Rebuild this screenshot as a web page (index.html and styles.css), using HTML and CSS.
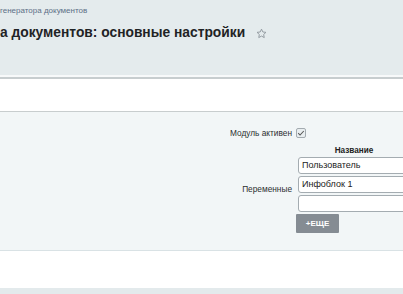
FILE: index.html
```html
<!DOCTYPE html>
<html lang="ru">
<head>
<meta charset="utf-8">
<title>Настройки генератора документов</title>
<link rel="stylesheet" href="styles.css">
</head>
<body>
<div class="page">
  <header class="head">
    <div class="crumbs">генератора документов</div>
    <div class="title-row">
      <h1 class="title">а документов: основные настройки</h1>
      <svg class="star" width="11" height="11" viewBox="0 0 24 24"><path d="M12 2.5l2.9 6.2 6.8.8-5 4.7 1.3 6.7L12 17.6l-6 3.3 1.3-6.7-5-4.7 6.8-.8z" fill="none" stroke="#8e969c" stroke-width="2" stroke-linejoin="round"/></svg>
    </div>
  </header>
  <div class="sep-light"></div>
  <div class="sep-dark"></div>
  <div class="tabs"></div>
  <section class="form">
    <div class="row row-active">
      <div class="label">Модуль активен</div>
      <div class="value"><span class="check"><svg width="8" height="8" viewBox="0 0 10 10"><path d="M1.5 5.2l2.3 2.3 4.7-5" fill="none" stroke="#555" stroke-width="1.3"/></svg></span></div>
    </div>
    <div class="row row-vars">
      <div class="label label-vars">Переменные</div>
      <div class="value">
        <div class="col-head">Название</div>
        <div class="inp">Пользователь</div>
        <div class="inp">Инфоблок 1</div>
        <div class="inp"></div>
        <div class="btn">+ЕЩЕ</div>
      </div>
    </div>
  </section>
  <div class="footer"></div>
  <div class="bottom"></div>
</div>
</body>
</html>
```

FILE: styles.css
```css
html, body { margin: 0; padding: 0; }
body {
  font-family: "Liberation Sans", Arial, sans-serif;
  background: #fff;
  overflow: hidden;
  width: 403px;
  height: 294px;
}
.page { width: 403px; overflow: hidden; }
.head {
  height: 75px;
  background: #e4ebed;
  box-sizing: border-box;
  padding: 6px 0 0 0;
}
.crumbs {
  font-size: 8px;
  color: #5c6f86;
  line-height: 10px;
}
.title-row {
  display: flex;
  align-items: center;
  margin-top: 8px;
}
.title {
  margin: 0;
  font-size: 13.8px;
  font-weight: bold;
  color: #1f2325;
  line-height: 18px;
}
.star { margin-left: 11px; }
.sep-light { height: 2px; background: #f7f9fa; }
.sep-dark { height: 2px; background: #c7cdcf; }
.tabs { height: 32px; background: #fff; border-bottom: 1px solid #c8cdce; }
.form {
  background: #f2f6f7;
  height: 139px;
  box-sizing: border-box;
  padding-top: 15px;
  border-bottom: 1px solid #d9e2e5;
}
.row {
  display: grid;
  grid-template-columns: 292px 200px;
  column-gap: 4px;
}
.label {
  font-size: 8.3px;
  color: #2c2f31;
  text-align: right;
  line-height: 10px;
}
.row-active { height: 10px; }
.row-active .label { padding-top: 1px; }
.row-active .value { display: flex; padding-top: 1px; }
.check {
  width: 8px;
  height: 8px;
  border: 1px solid #a3abb0;
  border-radius: 2px;
  background: #e9eef0;
  display: flex;
  align-items: center;
  justify-content: center;
}
.row-vars { margin-top: 9px; }
.label-vars { padding-top: 38px; }
.col-head {
  font-size: 8.2px;
  font-weight: bold;
  color: #222;
  width: 116px;
  text-align: center;
  height: 9px;
  line-height: 9px;
  margin-bottom: 2px;
}
.inp {
  width: 150px;
  height: 17px;
  box-sizing: border-box;
  margin-left: 2px;
  margin-top: 2px;
  border: 1px solid #a4acb1;
  border-radius: 3px;
  background: #fff;
  font-size: 9px;
  color: #222;
  padding: 0 3px;
  line-height: 15px;
}
.btn {
  width: 43px;
  height: 19px;
  margin-top: 2px;
  background: #858c93;
  border-radius: 1px;
  color: #fff;
  font-size: 8px;
  font-weight: bold;
  display: flex;
  align-items: center;
  justify-content: center;
}
.footer { height: 37px; background: #fff; }
.bottom { height: 10px; background: #e3eaec; }
```
